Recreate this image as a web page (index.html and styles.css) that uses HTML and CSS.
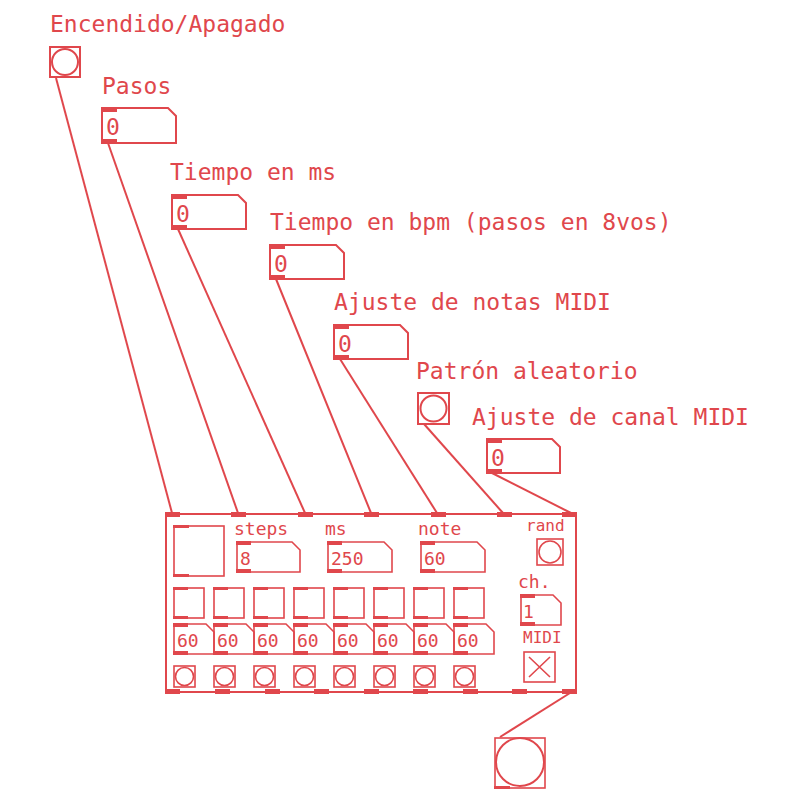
FILE: index.html
```html
<!DOCTYPE html>
<html lang="en">
<head>
    <meta charset="UTF-8">
    <title>Secuenciador MIDI</title>
    <link rel="stylesheet" href="styles.css">
</head>
<body>

<div class="patch">
<svg class="canvas" width="800" height="800" viewBox="0 0 800 800">

    <!-- wires -->
    <g class="wire">
        <line x1="56" y1="78" x2="172" y2="513"/>
        <line x1="108" y1="143" x2="238" y2="513"/>
        <line x1="178" y1="229" x2="305" y2="513"/>
        <line x1="276" y1="279" x2="371" y2="513"/>
        <line x1="340" y1="359" x2="437" y2="513"/>
        <line x1="424" y1="424" x2="503" y2="513"/>
        <line x1="492" y1="473" x2="571" y2="513"/>
        <line x1="570" y1="693" x2="500" y2="737"/>
    </g>

    <!-- comments -->
    <text class="lbl" x="50" y="32">Encendido/Apagado</text>
    <text class="lbl" x="102" y="94">Pasos</text>
    <text class="lbl" x="170" y="180">Tiempo en ms</text>
    <text class="lbl" x="270" y="230">Tiempo en bpm (pasos en 8vos)</text>
    <text class="lbl" x="334" y="310">Ajuste de notas MIDI</text>
    <text class="lbl" x="416" y="379">Patrón aleatorio</text>
    <text class="lbl" x="472" y="425">Ajuste de canal MIDI</text>

    <!-- on/off bang -->
    <rect class="ln" x="50" y="47" width="30" height="30"/>
    <circle class="ln" cx="65" cy="62" r="13"/>

    <!-- top number boxes -->
    <g>
        <path class="ln" d="M102 108 H168 L176 116 V143 H102 Z"/>
        <rect class="mk" x="102" y="107" width="15" height="5"/>
        <rect class="mk" x="102" y="139" width="15" height="5"/>
        <text class="lbl" x="106" y="135">0</text>

        <path class="ln" d="M172 195 H238 L246 203 V229 H172 Z"/>
        <rect class="mk" x="172" y="194" width="15" height="5"/>
        <rect class="mk" x="172" y="225" width="15" height="5"/>
        <text class="lbl" x="176" y="222">0</text>

        <path class="ln" d="M270 245 H336 L344 253 V279 H270 Z"/>
        <rect class="mk" x="270" y="244" width="15" height="5"/>
        <rect class="mk" x="270" y="275" width="15" height="5"/>
        <text class="lbl" x="274" y="272">0</text>

        <path class="ln" d="M334 325 H400 L408 333 V359 H334 Z"/>
        <rect class="mk" x="334" y="324" width="15" height="5"/>
        <rect class="mk" x="334" y="355" width="15" height="5"/>
        <text class="lbl" x="338" y="352">0</text>

        <path class="ln" d="M487 439 H552 L560 447 V473 H487 Z"/>
        <rect class="mk" x="487" y="438" width="15" height="5"/>
        <rect class="mk" x="487" y="469" width="15" height="5"/>
        <text class="lbl" x="491" y="466">0</text>
    </g>

    <!-- random pattern bang -->
    <rect class="ln" x="418" y="393" width="31" height="31"/>
    <circle class="ln" cx="433.5" cy="408.5" r="13"/>

    <!-- sequencer subpatch (graph on parent) -->
    <rect class="ln" x="166" y="514" width="410" height="178"/>
    <g class="mk">
        <rect x="165" y="512" width="15" height="5"/>
        <rect x="231" y="512" width="15" height="5"/>
        <rect x="298" y="512" width="15" height="5"/>
        <rect x="364" y="512" width="15" height="5"/>
        <rect x="431" y="512" width="15" height="5"/>
        <rect x="497" y="512" width="15" height="5"/>
        <rect x="562" y="512" width="15" height="5"/>

        <rect x="165" y="689" width="15" height="5"/>
        <rect x="215" y="689" width="15" height="5"/>
        <rect x="265" y="689" width="15" height="5"/>
        <rect x="314" y="689" width="15" height="5"/>
        <rect x="364" y="689" width="15" height="5"/>
        <rect x="413" y="689" width="15" height="5"/>
        <rect x="463" y="689" width="15" height="5"/>
        <rect x="512" y="689" width="15" height="5"/>
        <rect x="562" y="689" width="15" height="5"/>
    </g>

    <!-- step display -->
    <rect class="ln thin" x="174" y="526" width="50" height="50"/>
    <rect class="mk" x="173" y="525" width="16" height="3"/>
    <rect class="mk" x="173" y="574" width="16" height="3"/>

    <text class="sm" x="234" y="535">steps</text>
    <path class="ln thin" d="M237 542 H292 L300 550 V572 H237 Z"/>
    <rect class="mk" x="236" y="541" width="15" height="4"/>
    <rect class="mk" x="236" y="569" width="15" height="4"/>
    <text class="sm" x="240" y="565">8</text>

    <text class="sm" x="325" y="535">ms</text>
    <path class="ln thin" d="M328 542 H384 L392 550 V572 H328 Z"/>
    <rect class="mk" x="327" y="541" width="15" height="4"/>
    <rect class="mk" x="327" y="569" width="15" height="4"/>
    <text class="sm" x="331" y="565">250</text>

    <text class="sm" x="418" y="535">note</text>
    <path class="ln thin" d="M421 542 H477 L485 550 V572 H421 Z"/>
    <rect class="mk" x="420" y="541" width="15" height="4"/>
    <rect class="mk" x="420" y="569" width="15" height="4"/>
    <text class="sm" x="424" y="565">60</text>

    <text class="xs" x="526" y="531">rand</text>
    <rect class="ln thin" x="537" y="539" width="26" height="26"/>
    <circle class="ln thin" cx="550" cy="552" r="11"/>

    <text class="sm" x="518" y="588">ch.</text>
    <path class="ln thin" d="M521 595 H553 L561 603 V625 H521 Z"/>
    <rect class="mk" x="520" y="594" width="15" height="4"/>
    <rect class="mk" x="520" y="622" width="15" height="4"/>
    <text class="sm" x="523" y="618">1</text>

    <text class="xs" x="523" y="643">MIDI</text>
    <rect class="ln thin" x="524" y="652" width="31" height="30"/>
    <path class="ln thin" d="M529 657 L550 677 M550 657 L529 677"/>

    <!-- 8 step cells -->
    <g>
        <rect class="ln thin" x="174" y="588" width="30" height="30"/>
        <rect class="ln thin" x="214" y="588" width="30" height="30"/>
        <rect class="ln thin" x="254" y="588" width="30" height="30"/>
        <rect class="ln thin" x="294" y="588" width="30" height="30"/>
        <rect class="ln thin" x="334" y="588" width="30" height="30"/>
        <rect class="ln thin" x="374" y="588" width="30" height="30"/>
        <rect class="ln thin" x="414" y="588" width="30" height="30"/>
        <rect class="ln thin" x="454" y="588" width="30" height="30"/>
    </g>
    <g class="mk">
        <rect x="173" y="587" width="15" height="3"/><rect x="173" y="616" width="15" height="3"/>
        <rect x="213" y="587" width="15" height="3"/><rect x="213" y="616" width="15" height="3"/>
        <rect x="253" y="587" width="15" height="3"/><rect x="253" y="616" width="15" height="3"/>
        <rect x="293" y="587" width="15" height="3"/><rect x="293" y="616" width="15" height="3"/>
        <rect x="333" y="587" width="15" height="3"/><rect x="333" y="616" width="15" height="3"/>
        <rect x="373" y="587" width="15" height="3"/><rect x="373" y="616" width="15" height="3"/>
        <rect x="413" y="587" width="15" height="3"/><rect x="413" y="616" width="15" height="3"/>
        <rect x="453" y="587" width="15" height="3"/><rect x="453" y="616" width="15" height="3"/>
    </g>

    <!-- 8 note boxes -->
    <g class="ln thin">
        <path d="M174 624 H206 L214 632 V654 H174 Z"/>
        <path d="M214 624 H246 L254 632 V654 H214 Z"/>
        <path d="M254 624 H286 L294 632 V654 H254 Z"/>
        <path d="M294 624 H326 L334 632 V654 H294 Z"/>
        <path d="M334 624 H366 L374 632 V654 H334 Z"/>
        <path d="M374 624 H406 L414 632 V654 H374 Z"/>
        <path d="M414 624 H446 L454 632 V654 H414 Z"/>
        <path d="M454 624 H486 L494 632 V654 H454 Z"/>
    </g>
    <g class="mk">
        <rect x="173" y="623" width="15" height="4"/><rect x="173" y="651" width="15" height="4"/>
        <rect x="213" y="623" width="15" height="4"/><rect x="213" y="651" width="15" height="4"/>
        <rect x="253" y="623" width="15" height="4"/><rect x="253" y="651" width="15" height="4"/>
        <rect x="293" y="623" width="15" height="4"/><rect x="293" y="651" width="15" height="4"/>
        <rect x="333" y="623" width="15" height="4"/><rect x="333" y="651" width="15" height="4"/>
        <rect x="373" y="623" width="15" height="4"/><rect x="373" y="651" width="15" height="4"/>
        <rect x="413" y="623" width="15" height="4"/><rect x="413" y="651" width="15" height="4"/>
        <rect x="453" y="623" width="15" height="4"/><rect x="453" y="651" width="15" height="4"/>
    </g>
    <g>
        <text class="sm" x="177" y="647">60</text>
        <text class="sm" x="217" y="647">60</text>
        <text class="sm" x="257" y="647">60</text>
        <text class="sm" x="297" y="647">60</text>
        <text class="sm" x="337" y="647">60</text>
        <text class="sm" x="377" y="647">60</text>
        <text class="sm" x="417" y="647">60</text>
        <text class="sm" x="457" y="647">60</text>
    </g>

    <!-- 8 step bangs -->
    <g class="ln thin">
        <rect x="174" y="666" width="21" height="21"/><circle cx="184.5" cy="676.5" r="9"/>
        <rect x="214" y="666" width="21" height="21"/><circle cx="224.5" cy="676.5" r="9"/>
        <rect x="254" y="666" width="21" height="21"/><circle cx="264.5" cy="676.5" r="9"/>
        <rect x="294" y="666" width="21" height="21"/><circle cx="304.5" cy="676.5" r="9"/>
        <rect x="334" y="666" width="21" height="21"/><circle cx="344.5" cy="676.5" r="9"/>
        <rect x="374" y="666" width="21" height="21"/><circle cx="384.5" cy="676.5" r="9"/>
        <rect x="414" y="666" width="21" height="21"/><circle cx="424.5" cy="676.5" r="9"/>
        <rect x="454" y="666" width="21" height="21"/><circle cx="464.5" cy="676.5" r="9"/>
    </g>

    <!-- output bang -->
    <rect class="ln thin" x="495" y="738" width="50" height="50"/>
    <circle class="ln" cx="520" cy="762" r="24"/>
    <rect class="mk" x="494" y="786" width="16" height="3"/>

</svg>
</div>

</body>
</html>
```

FILE: styles.css
```css
body {
    margin: 0;
    background: #ffffff;
}
.patch {
    width: 800px;
    height: 800px;
}
.canvas {
    display: block;
}
.wire line {
    stroke: #e0474c;
    stroke-width: 2;
}
.ln {
    fill: none;
    stroke: #e0474c;
    stroke-width: 2;
}
.thin {
    stroke-width: 1.6;
}
.mk {
    fill: #e0474c;
}
.lbl, .sm, .xs {
    font-family: "DejaVu Sans Mono", "Liberation Mono", monospace;
    fill: #e0474c;
}
.lbl {
    font-size: 23px;
}
.sm {
    font-size: 18px;
}
.xs {
    font-size: 16px;
}
```
